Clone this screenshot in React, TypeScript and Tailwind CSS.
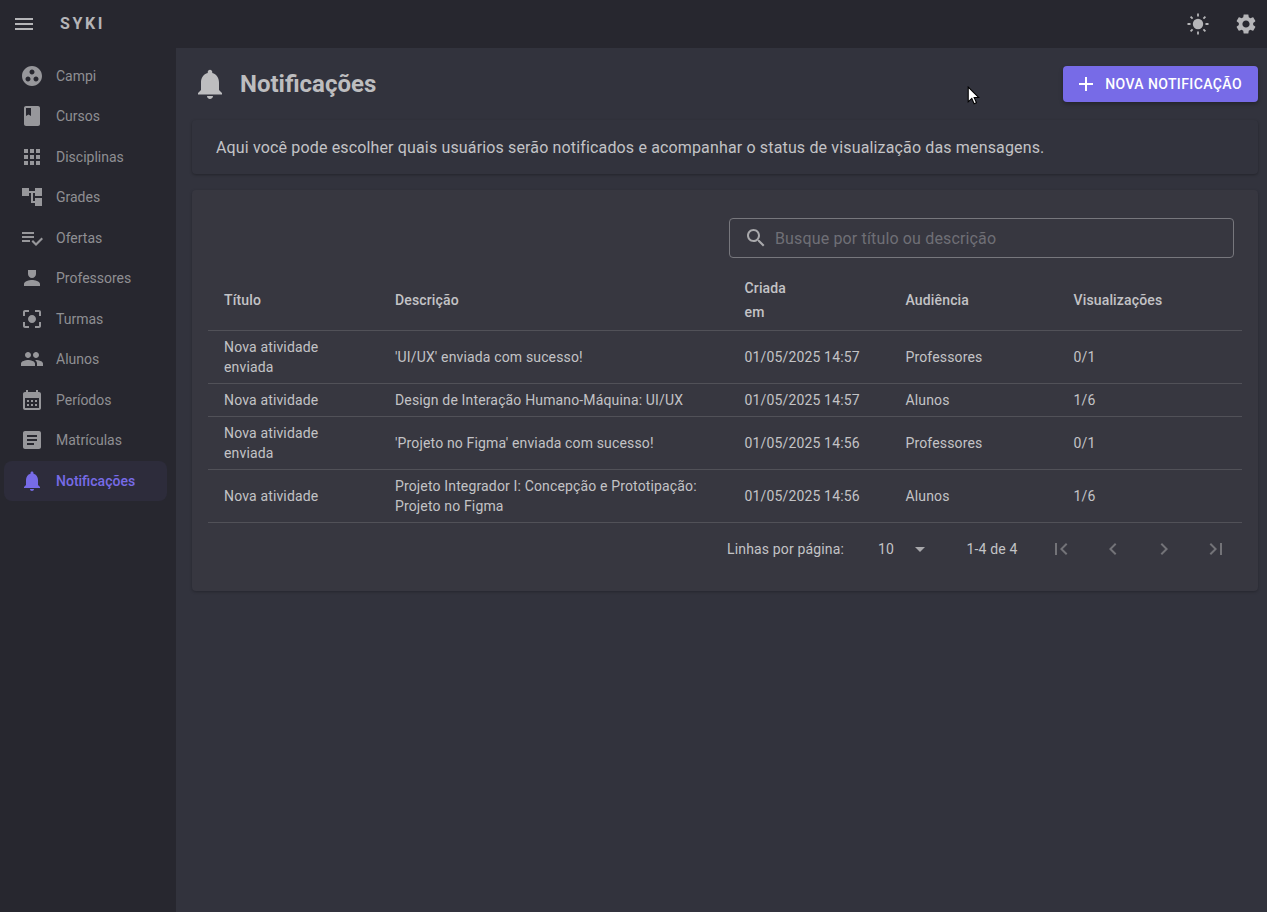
const menuItems = [
  { label: 'Campi', d: 'M12 2C6.48 2 2 6.48 2 12s4.48 10 10 10 10-4.48 10-10S17.52 2 12 2zM8 17.5c-1.38 0-2.5-1.12-2.5-2.5s1.12-2.5 2.5-2.5 2.5 1.12 2.5 2.5-1.12 2.5-2.5 2.5zM9.5 8c0-1.38 1.12-2.5 2.5-2.5s2.5 1.12 2.5 2.5-1.12 2.5-2.5 2.5S9.5 9.38 9.5 8zm6.5 9.5c-1.38 0-2.5-1.12-2.5-2.5s1.12-2.5 2.5-2.5 2.5 1.12 2.5 2.5-1.12 2.5-2.5 2.5z' },
  { label: 'Cursos', d: 'M18 2H6c-1.1 0-2 .9-2 2v16c0 1.1.9 2 2 2h12c1.1 0 2-.9 2-2V4c0-1.1-.9-2-2-2zM6 4h5v8l-2.5-1.5L6 12V4z' },
  { label: 'Disciplinas', d: 'M4 8h4V4H4v4zm6 12h4v-4h-4v4zm-6 0h4v-4H4v4zm0-6h4v-4H4v4zm6 0h4v-4h-4v4zm6-10v4h4V4h-4zm-6 4h4V4h-4v4zm6 6h4v-4h-4v4zm0 6h4v-4h-4v4z' },
  { label: 'Grades', d: 'M22 11V3h-7v3H9V3H2v8h7V8h2v10h4v3h7v-8h-7v3h-2V8h2v3z' },
  { label: 'Ofertas', d: 'M14 10H2v2h12v-2zm0-4H2v2h12V6zM2 16h8v-2H2v2zm19.5-4.5L23 13l-6.99 7-4.51-4.5L13 14l3.01 3 5.49-5.5z' },
  { label: 'Professores', d: 'M12 12c2.21 0 4-1.79 4-4V4H8v4c0 2.21 1.79 4 4 4zm0 2c-2.67 0-8 1.34-8 4v2h16v-2c0-2.66-5.33-4-8-4z' },
  { label: 'Turmas', d: 'M5 15H3v4c0 1.1.9 2 2 2h4v-2H5v-4zM5 5h4V3H5c-1.1 0-2 .9-2 2v4h2V5zm14-2h-4v2h4v4h2V5c0-1.1-.9-2-2-2zm0 16h-4v2h4c1.1 0 2-.9 2-2v-4h-2v4zM12 8c-2.21 0-4 1.79-4 4s1.79 4 4 4 4-1.79 4-4-1.79-4-4-4z' },
  { label: 'Alunos', d: 'M16 11c1.66 0 2.99-1.34 2.99-3S17.66 5 16 5c-1.66 0-3 1.34-3 3s1.34 3 3 3zm-8 0c1.66 0 2.99-1.34 2.99-3S9.66 5 8 5C6.34 5 5 6.34 5 8s1.34 3 3 3zm0 2c-2.33 0-7 1.17-7 3.5V19h14v-2.5c0-2.33-4.67-3.5-7-3.5zm8 0c-.29 0-.62.02-.97.05 1.16.84 1.97 1.97 1.97 3.45V19h6v-2.5c0-2.33-4.67-3.5-7-3.5z' },
  { label: 'Períodos', d: 'M19 4h-1V2h-2v2H8V2H6v2H5c-1.1 0-2 .9-2 2v14c0 1.1.9 2 2 2h14c1.1 0 2-.9 2-2V6c0-1.1-.9-2-2-2zm0 16H5V10h14v10zM9 14H7v-2h2v2zm4 0h-2v-2h2v2zm4 0h-2v-2h2v2zm-8 4H7v-2h2v2zm4 0h-2v-2h2v2zm4 0h-2v-2h2v2z' },
  { label: 'Matrículas', d: 'M19 3H5c-1.1 0-2 .9-2 2v14c0 1.1.9 2 2 2h14c1.1 0 2-.9 2-2V5c0-1.1-.9-2-2-2zm-5 14H7v-2h7v2zm3-4H7v-2h10v2zm0-4H7V7h10v2z' },
  { label: 'Notificações', d: bell(), active: true },
];

const rows = [
  { title: 'Nova atividade enviada', desc: "'UI/UX' enviada com sucesso!", date: '01/05/2025 14:57', aud: 'Professores', views: '0/1' },
  { title: 'Nova atividade', desc: 'Design de Interação Humano-Máquina: UI/UX', date: '01/05/2025 14:57', aud: 'Alunos', views: '1/6' },
  { title: 'Nova atividade enviada', desc: "'Projeto no Figma' enviada com sucesso!", date: '01/05/2025 14:56', aud: 'Professores', views: '0/1' },
  { title: 'Nova atividade', desc: 'Projeto Integrador I: Concepção e Prototipação: Projeto no Figma', date: '01/05/2025 14:56', aud: 'Alunos', views: '1/6' },
];

function bell() {
  return 'M12 22c1.1 0 2-.9 2-2h-4c0 1.1.89 2 2 2zm6-6v-5c0-3.07-1.64-5.64-4.5-6.32V4c0-.83-.67-1.5-1.5-1.5s-1.5.67-1.5 1.5v.68C7.63 5.36 6 7.92 6 11v5l-2 2v1h16v-1l-2-2z';
}

function Icon({ d, className }: { d: string; className: string }) {
  return (
    <svg viewBox="0 0 24 24" fill="currentColor" className={className}>
      <path d={d} />
    </svg>
  );
}

function AppBar() {
  return (
    <header className="flex h-12 shrink-0 items-center bg-[#27272f] pl-3 pr-[9px] text-[#b5b5b8]">
      <Icon className="h-6 w-6" d="M3 18h18v-2H3v2zm0-5h18v-2H3v2zm0-7v2h18V6H3z" />
      <span className="ml-6 text-base font-bold tracking-[2.6px]">SYKI</span>
      <div className="ml-auto flex items-center gap-6">
        <svg viewBox="0 0 24 24" className="h-6 w-6" fill="currentColor" stroke="currentColor" strokeWidth="1.8">
          <circle cx="12" cy="12" r="5.2" stroke="none" />
          <path fill="none" d="M12 1.5v3M12 19.5v3M1.5 12h3M19.5 12h3M4.6 4.6l2 2M17.4 17.4l2 2M4.6 19.4l2-2M17.4 6.6l2-2" />
        </svg>
        <Icon className="h-6 w-6" d="M19.14 12.94c.04-.3.06-.61.06-.94 0-.32-.02-.64-.07-.94l2.03-1.58c.18-.14.23-.41.12-.61l-1.92-3.32c-.12-.22-.37-.29-.59-.22l-2.39.96c-.5-.38-1.03-.7-1.62-.94l-.36-2.54c-.04-.24-.24-.41-.48-.41h-3.84c-.24 0-.43.17-.47.41l-.36 2.54c-.59.24-1.13.57-1.62.94l-2.39-.96c-.22-.08-.47 0-.59.22L2.74 8.87c-.12.21-.08.47.12.61l2.03 1.58c-.05.3-.09.63-.09.94s.02.64.07.94l-2.03 1.58c-.18.14-.23.41-.12.61l1.92 3.32c.12.22.37.29.59.22l2.39-.96c.5.38 1.03.7 1.62.94l.36 2.54c.05.24.24.41.48.41h3.84c.24 0 .44-.17.47-.41l.36-2.54c.59-.24 1.13-.56 1.62-.94l2.39.96c.22.08.47 0 .59-.22l1.92-3.32c.12-.22.07-.47-.12-.61l-2.01-1.58zM12 15.6c-1.98 0-3.6-1.62-3.6-3.6s1.62-3.6 3.6-3.6 3.6 1.62 3.6 3.6-1.62 3.6-3.6 3.6z" />
      </div>
    </header>
  );
}

function Sidebar() {
  return (
    <nav className="flex w-[176px] shrink-0 flex-col bg-[#27272f] pb-2 pl-1 pr-[9px] pt-[7.6px]">
      {menuItems.map((item) => (
        <a
          key={item.label}
          className={`flex h-[40.5px] items-center gap-3 rounded-lg pl-4 text-sm ${
            item.active ? 'bg-[#2d2c3b] font-medium text-[#776be7]' : 'text-[#8f8f93]'
          }`}
        >
          <Icon className={`h-6 w-6 shrink-0 ${item.active ? 'text-[#776be7]' : 'text-[#97979b]'}`} d={item.d} />
          {item.label}
        </a>
      ))}
    </nav>
  );
}

const thClass = 'border-b border-[#515158] px-4 py-1.5 text-left text-sm font-medium leading-6 text-[#c3c3c6]';
const tdClass = 'border-b border-[#515158] px-4 py-1.5 text-sm leading-5 text-[#c3c3c6]';

function NotificationsTable() {
  return (
    <section className="mt-4 flex h-[401px] flex-col rounded bg-[#373740] px-4 pt-7 tracking-[0.15px] shadow-[0_1px_3px_rgba(0,0,0,0.25)]">
      <div className="flex justify-end pr-2">
        <div className="flex h-10 w-[505px] items-center gap-[7px] rounded border border-[#77777d] pl-[14px] text-[#a8a8ab]">
          <Icon className="h-6 w-6" d="M15.5 14h-.79l-.28-.27C15.41 12.59 16 11.11 16 9.5 16 5.91 13.09 3 9.5 3S3 5.91 3 9.5 5.91 16 9.5 16c1.61 0 3.09-.59 4.23-1.57l.27.28v.79l5 4.99L20.49 19l-4.99-5zm-6 0C7.01 14 5 11.99 5 9.5S7.01 5 9.5 5 14 7.01 14 9.5 11.99 14 9.5 14z" />
          <span className="pt-px text-base text-[#6f6f76]">Busque por título ou descrição</span>
        </div>
      </div>

      <table className="mt-3 w-full table-fixed border-separate border-spacing-0">
        <colgroup>
          <col className="w-[171px]" />
          <col className="w-[349.5px]" />
          <col className="w-[161px]" />
          <col className="w-[168px]" />
          <col />
        </colgroup>
        <thead>
          <tr>
            <th className={thClass}>Título</th>
            <th className={thClass}>Descrição</th>
            <th className={thClass}>Criada<br />em</th>
            <th className={thClass}>Audiência</th>
            <th className={thClass}>Visualizações</th>
          </tr>
        </thead>
        <tbody>
          {rows.map((row) => (
            <tr key={row.desc}>
              <td className={tdClass}>{row.title}</td>
              <td className={tdClass}>{row.desc}</td>
              <td className={tdClass}>{row.date}</td>
              <td className={tdClass}>{row.aud}</td>
              <td className={tdClass}>{row.views}</td>
            </tr>
          ))}
        </tbody>
      </table>

      <div className="flex h-[52px] items-center pl-[519px] text-sm text-[#c3c3c6]">
        <span>Linhas por página:</span>
        <span className="ml-[34px]">10</span>
        <Icon className="ml-[14px] h-6 w-6 text-[#a8a8ab]" d="M7 10l5 5 5-5z" />
        <span className="ml-[34.5px]">1-4 de 4</span>
        <div className="ml-[31.5px] flex gap-[27.6px] text-[#737378]">
          <Icon className="h-6 w-6" d="M18.41 16.59L13.82 12l4.59-4.59L17 6l-6 6 6 6zM6 6h2v12H6z" />
          <Icon className="h-6 w-6" d="M15.41 7.41L14 6l-6 6 6 6 1.41-1.41L10.83 12z" />
          <Icon className="h-6 w-6" d="M10 6L8.59 7.41 13.17 12l-4.58 4.58L10 18l6-6z" />
          <Icon className="h-6 w-6" d="M5.59 7.41L10.18 12l-4.59 4.59L7 18l6-6-6-6zM16 6h2v12h-2z" />
        </div>
      </div>
    </section>
  );
}

export default function App() {
  return (
    <div className="relative flex h-[912px] flex-col overflow-hidden bg-[#32333d] font-['Roboto',sans-serif]">
      <AppBar />
      <div className="flex flex-1">
        <Sidebar />
        <main className="flex-1 pl-4 pr-[9px] pt-[18px]">
          <div className="flex h-9 items-center text-[#bdbdbf]">
            <Icon className="h-9 w-9" d={bell()} />
            <h1 className="ml-3 text-2xl font-bold">Notificações</h1>
            <button className="ml-auto flex h-9 items-center gap-[7px] rounded bg-[#776be7] pl-[11px] pr-4 text-sm font-medium tracking-[0.4px] text-white shadow-[0_2px_4px_rgba(0,0,0,0.3)]">
              <Icon className="h-6 w-6" d="M19 13h-6v6h-2v-6H5v-2h6V5h2v6h6v2z" />
              <span>NOVA NOTIFICAÇÃO</span>
            </button>
          </div>
          <div className="mt-[18px] flex h-[54px] items-center rounded bg-[#32333d] pl-6 pt-px text-base tracking-[0.15px] text-[#c3c3c6] shadow-[0_1px_3px_rgba(0,0,0,0.3)]">
            Aqui você pode escolher quais usuários serão notificados e acompanhar o status de visualização das mensagens.
          </div>
          <NotificationsTable />
        </main>
      </div>

      {/* mouse pointer captured in the screenshot */}
      <svg viewBox="0 0 12 18" className="absolute left-[967px] top-[86px] h-[19px] w-[13px]">
        <path d="M1 1v14l3.4-3.2 2.2 5 2.2-1-2.2-4.9H11z" fill="#fff" stroke="#000" strokeWidth="1" />
      </svg>
    </div>
  );
}
